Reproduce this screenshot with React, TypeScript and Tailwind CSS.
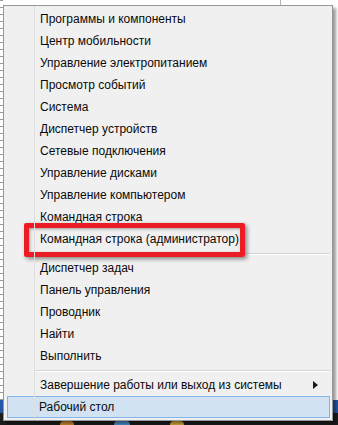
import React from 'react';

type Entry = { label?: string; sep?: boolean; arrow?: boolean; active?: boolean };

const entries: Entry[] = [
  { label: 'Программы и компоненты' },
  { label: 'Центр мобильности' },
  { label: 'Управление электропитанием' },
  { label: 'Просмотр событий' },
  { label: 'Система' },
  { label: 'Диспетчер устройств' },
  { label: 'Сетевые подключения' },
  { label: 'Управление дисками' },
  { label: 'Управление компьютером' },
  { label: 'Командная строка' },
  { label: 'Командная строка (администратор)' },
  { sep: true },
  { label: 'Диспетчер задач' },
  { label: 'Панель управления' },
  { label: 'Проводник' },
  { label: 'Найти' },
  { label: 'Выполнить' },
  { sep: true },
  { label: 'Завершение работы или выход из системы', arrow: true },
  { label: 'Рабочий стол', active: true },
];

function MenuRow({ e }: { e: Entry }) {
  if (e.sep) {
    return (
      <div className="h-[7px] pl-[31px] pr-[2px] pt-[3px]">
        <div className="h-px bg-[#d5d5d5]" />
        <div className="h-px bg-white" />
      </div>
    );
  }
  return (
    <div
      className={
        e.active
          ? 'h-[22px] ml-[3px] mr-[2px] flex items-center pl-[31px] pr-[10px] bg-[#d1e2f3] border border-[#84b5e8]'
          : 'h-[22px] ml-[3px] mr-[2px] flex items-center pl-[32px] pr-[11px] border border-transparent'
      }
    >
      <span className="flex-1 text-[12px] leading-none text-[#0a0a0a] whitespace-nowrap">{e.label}</span>
      {e.arrow && (
        <svg width="5" height="8" viewBox="0 0 5 8">
          <path d="M0 0 L5 4 L0 8 Z" fill="#1a1a1a" />
        </svg>
      )}
    </div>
  );
}

export default function App() {
  return (
    <div
      className="relative w-[338px] h-[425px] overflow-hidden bg-white"
      style={{ fontFamily: '"Segoe UI", "Liberation Sans", Arial, sans-serif' }}
    >
      {/* desktop behind the menu */}
      <div className="flex flex-col h-full">
        <div className="flex flex-1">
          <div className="w-[3px] bg-white bg-[repeating-linear-gradient(to_bottom,#9a9a9a_0_1px,transparent_1px_7px)]" />
          <div className="flex-1 flex">
            <div className="w-[278px] h-[5px] border-r border-[#b4b4b4]" />
          </div>
        </div>
        <div className="h-[13px] bg-[#2457a6]" />
        <div className="h-[12px] bg-[#1c1c1c] flex items-end gap-[40px] pl-[60px]">
          <div className="w-[14px] h-[4px] rounded-t-full bg-[#c98a2a]" />
          <div className="w-[16px] h-[5px] rounded-t-full bg-[#4a8fc9]" />
          <div className="w-[14px] h-[4px] rounded-t-full bg-[#d2a93a]" />
        </div>
      </div>

      {/* context menu */}
      <div className="absolute left-[3px] top-[5px] w-[330px] bg-[#f0f0f0] border border-[#979797] py-[2px] shadow-[3px_3px_3px_rgba(0,0,0,0.4)]">
        <div className="absolute left-[30px] top-0 bottom-0 w-px bg-[#dedede] z-10" />
        {entries.map((e, i) => (
          <MenuRow key={i} e={e} />
        ))}
      </div>

      {/* red highlight frame */}
      <div className="absolute left-[24px] top-[223px] w-[221px] h-[34px] border-[5px] border-[#ec1c24] rounded-[2px] shadow-[2px_2px_4px_rgba(0,0,0,0.45),inset_1px_1px_3px_rgba(0,0,0,0.35)]" />
    </div>
  );
}
